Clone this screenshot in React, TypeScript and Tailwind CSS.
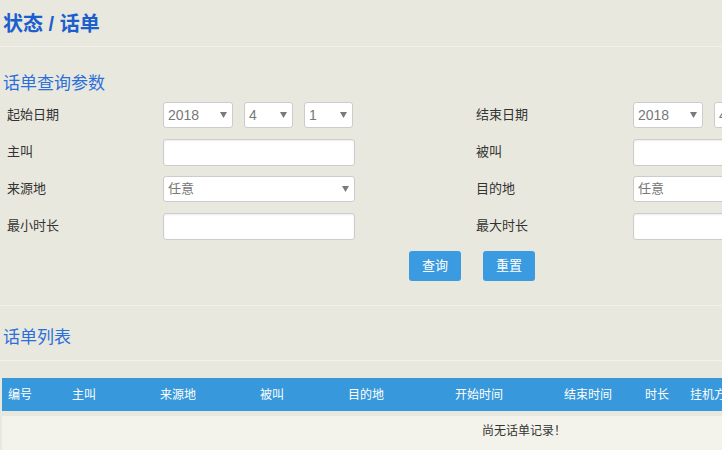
import React from 'react'

const font = { fontFamily: '"Liberation Sans", "Noto Sans CJK SC", sans-serif' }
const cjk = { fontFamily: '"Noto Sans CJK SC", sans-serif' }

function Arrow() {
  return (
    <svg width="7" height="6" viewBox="0 0 7 6" className="shrink-0">
      <path d="M0 0 L7 0 L3.5 6 Z" fill="#7a7a7a" />
    </svg>
  )
}

function Select({ value, width, cn = false, arrow = true }: { value: string; width: string; cn?: boolean; arrow?: boolean }) {
  return (
    <div
      className={`${width} h-[26px] bg-white border border-[#cccccc] rounded-[3px] flex items-center justify-between pl-[4px] pr-[5px] shrink-0`}
    >
      <span className={cn ? 'text-[13px] text-[#777777]' : 'text-[14px] text-[#777777]'}>{value}</span>
      {arrow && <Arrow />}
    </div>
  )
}

function Input({ width }: { width: string }) {
  return (
    <div
      className={`${width} h-[27px] bg-white border border-[#cccccc] rounded-[3px] shadow-[inset_0_1px_2px_rgba(0,0,0,0.08)] shrink-0`}
    />
  )
}

function DateGroup() {
  return (
    <div className="flex gap-[11px]">
      <Select value="2018" width="w-[70px]" />
      <Select value="4" width="w-[49px]" />
      <Select value="1" width="w-[49px]" />
    </div>
  )
}

function Row({
  left,
  leftCtrl,
  right,
  rightCtrl,
}: {
  left: string
  leftCtrl: React.ReactNode
  right: string
  rightCtrl: React.ReactNode
}) {
  return (
    <div className="flex items-center h-[26px]">
      <div className="w-[163px] pl-[7px] text-[13px] text-[#333333] shrink-0">{left}</div>
      <div className="w-[313px] shrink-0">{leftCtrl}</div>
      <div className="w-[157px] text-[13px] text-[#333333] shrink-0">{right}</div>
      <div className="shrink-0">{rightCtrl}</div>
    </div>
  )
}

const columns = [
  { name: '编号', w: 'w-[64px]' },
  { name: '主叫', w: 'w-[88px]' },
  { name: '来源地', w: 'w-[100px]' },
  { name: '被叫', w: 'w-[88px]' },
  { name: '目的地', w: 'w-[107px]' },
  { name: '开始时间', w: 'w-[109px]' },
  { name: '结束时间', w: 'w-[81px]' },
  { name: '时长', w: 'w-[45px]' },
  { name: '挂机方', w: 'w-[80px]' },
]

export default function App() {
  return (
    <div className="w-[722px] h-[450px] overflow-hidden bg-[#e9e8de]" style={font}>
      <div className="w-[1100px]">
        {/* Page title */}
        <div className="h-[47px] flex items-center px-[3px] pt-[1px] border-b border-[#f2f1ea]">
          <h1 className="text-[20px] font-bold text-[#1b5fcf] leading-none">状态 / 话单</h1>
        </div>

        {/* Query params */}
        <div className="mt-[27px] px-[3px] h-[20px] leading-[20px] text-[17px] text-[#2b6fda]">话单查询参数</div>

        <div className="mt-[8px] flex flex-col gap-[11px]">
          <Row left="起始日期" leftCtrl={<DateGroup />} right="结束日期" rightCtrl={<DateGroup />} />
          <Row
            left="主叫"
            leftCtrl={<Input width="w-[192px]" />}
            right="被叫"
            rightCtrl={<Input width="w-[192px]" />}
          />
          <Row
            left="来源地"
            leftCtrl={<Select cn value="任意" width="w-[192px]" />}
            right="目的地"
            rightCtrl={<Select cn value="任意" width="w-[192px]" />}
          />
          <Row
            left="最小时长"
            leftCtrl={<Input width="w-[192px]" />}
            right="最大时长"
            rightCtrl={<Input width="w-[192px]" />}
          />
        </div>

        <div className="mt-[12px] flex pl-[409px] gap-[22px]">
          <button className="w-[52px] h-[30px] rounded-[3px] bg-[#3a9be0] text-white text-[13px]">查询</button>
          <button className="w-[52px] h-[30px] rounded-[3px] bg-[#3a9be0] text-white text-[13px]">重置</button>
        </div>

        <div className="mt-[24px] border-t border-[#f2f1ea]" />

        {/* List */}
        <div className="mt-[22px] px-[3px] h-[20px] leading-[20px] text-[17px] text-[#2b6fda]">话单列表</div>
        <div className="mt-[12px] border-t border-[#f2f1ea]" />

        <div className="mt-[17px] ml-[2px] w-[1044px]">
          <div className="h-[33px] bg-[#3799db] flex items-center">
            {columns.map((c) => (
              <div key={c.name} className={`${c.w} pl-[6px] text-[12px] text-white shrink-0`}>
                {c.name}
              </div>
            ))}
          </div>
          <div className="mt-[5px] h-[40px] bg-[#f3f3ec] flex justify-center pt-[5px]">
            <span className="text-[12px] text-[#333333]" style={cjk}>尚无话单记录！</span>
          </div>
        </div>
      </div>
    </div>
  )
}
